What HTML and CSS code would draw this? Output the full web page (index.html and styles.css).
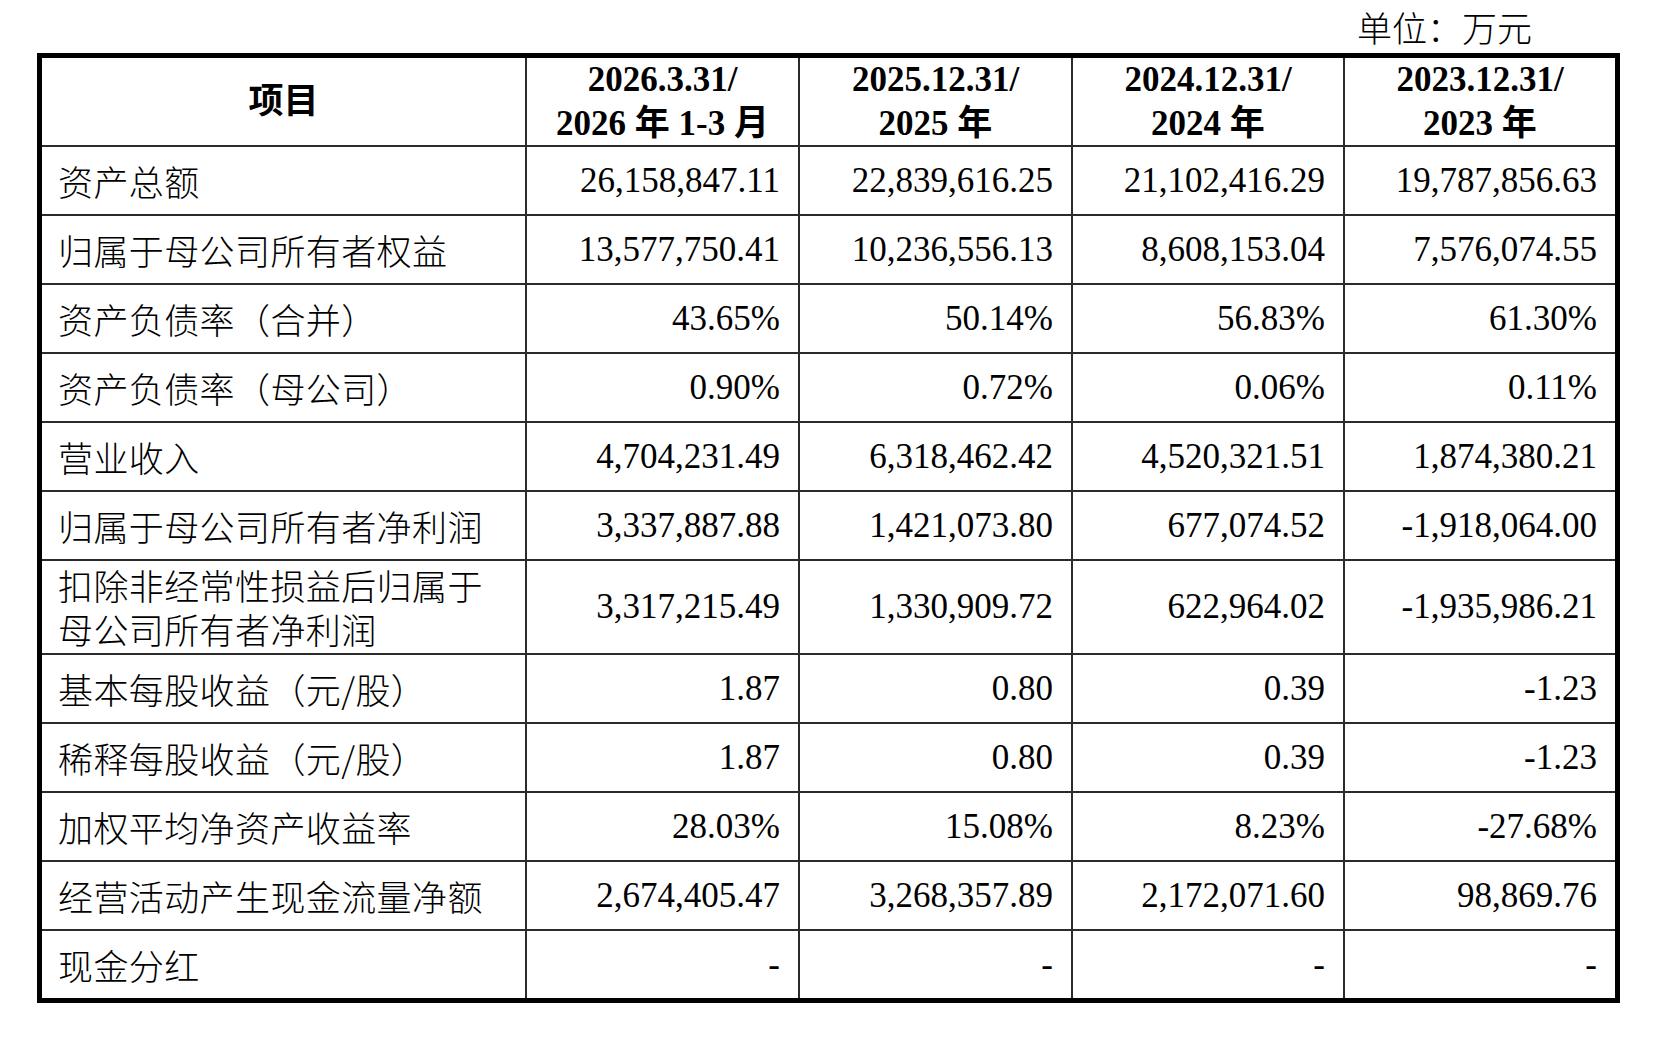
FILE: index.html
```html
<!DOCTYPE html>
<html lang="zh-CN">
<head>
<meta charset="utf-8">
<title>主要财务数据</title>
<link rel="stylesheet" href="styles.css">
</head>
<body>
<div class="page">
  <div class="unit">单位：万元</div>
  <table class="fin">
    <colgroup>
      <col class="c-item">
      <col class="c-a">
      <col class="c-b">
      <col class="c-c">
      <col class="c-d">
    </colgroup>
    <thead>
      <tr class="head">
        <th>项目</th>
        <th>2026.3.31/<br>2026 年 1-3 月</th>
        <th>2025.12.31/<br>2025 年</th>
        <th>2024.12.31/<br>2024 年</th>
        <th class="last">2023.12.31/<br>2023 年</th>
      </tr>
    </thead>
    <tbody>
      <tr><td class="label">资产总额</td><td>26,158,847.11</td><td>22,839,616.25</td><td>21,102,416.29</td><td class="last">19,787,856.63</td></tr>
      <tr><td class="label">归属于母公司所有者权益</td><td>13,577,750.41</td><td>10,236,556.13</td><td>8,608,153.04</td><td class="last">7,576,074.55</td></tr>
      <tr><td class="label">资产负债率（合并）</td><td>43.65%</td><td>50.14%</td><td>56.83%</td><td class="last">61.30%</td></tr>
      <tr><td class="label">资产负债率（母公司）</td><td>0.90%</td><td>0.72%</td><td>0.06%</td><td class="last">0.11%</td></tr>
      <tr><td class="label">营业收入</td><td>4,704,231.49</td><td>6,318,462.42</td><td>4,520,321.51</td><td class="last">1,874,380.21</td></tr>
      <tr><td class="label">归属于母公司所有者净利润</td><td>3,337,887.88</td><td>1,421,073.80</td><td>677,074.52</td><td class="last">-1,918,064.00</td></tr>
      <tr class="tall"><td class="label"><div class="ln">扣除非经常性损益后归属于</div><div class="ln">母公司所有者净利润</div></td><td>3,317,215.49</td><td>1,330,909.72</td><td>622,964.02</td><td class="last">-1,935,986.21</td></tr>
      <tr><td class="label">基本每股收益（元/股）</td><td>1.87</td><td>0.80</td><td>0.39</td><td class="last">-1.23</td></tr>
      <tr><td class="label">稀释每股收益（元/股）</td><td>1.87</td><td>0.80</td><td>0.39</td><td class="last">-1.23</td></tr>
      <tr><td class="label">加权平均净资产收益率</td><td>28.03%</td><td>15.08%</td><td>8.23%</td><td class="last">-27.68%</td></tr>
      <tr><td class="label">经营活动产生现金流量净额</td><td>2,674,405.47</td><td>3,268,357.89</td><td>2,172,071.60</td><td class="last">98,869.76</td></tr>
      <tr class="final"><td class="label">现金分红</td><td>-</td><td>-</td><td>-</td><td class="last">-</td></tr>
    </tbody>
  </table>
</div>
</body>
</html>
```

FILE: styles.css
```css
html, body {
  margin: 0;
  padding: 0;
  background: #ffffff;
}

body {
  font-family: "Liberation Serif", "Noto Sans CJK SC", serif;
  color: #000000;
  font-size: 35px;
}

.page {
  width: 1662px;
  height: 1040px;
  padding-left: 37px;
  box-sizing: border-box;
}

.unit {
  width: 1583px;
  height: 53px;
  line-height: 54px;
  padding-right: 88px;
  box-sizing: border-box;
  text-align: right;
  font-family: "Noto Sans CJK SC", sans-serif;
  font-weight: 300;
  font-size: 35px;
}

.fin {
  width: 1583px;
  box-sizing: border-box;
  border: 5px solid #000000;
  border-collapse: separate;
  border-spacing: 0;
  table-layout: fixed;
}

.c-item { width: 485px; }
.c-a { width: 273px; }
.c-b { width: 273px; }
.c-c { width: 272px; }
.c-d { width: 270px; }

.fin th,
.fin td {
  box-sizing: border-box;
  border-right: 2px solid #2b2b2b;
  border-bottom: 2px solid #2b2b2b;
  padding: 0;
  vertical-align: middle;
}

.fin th.last,
.fin td.last {
  border-right: none;
}

.fin tr.final td {
  border-bottom: none;
}

.head {
  height: 89px;
}

.fin th {
  font-weight: bold;
  text-align: center;
  line-height: 43.5px;
  white-space: nowrap;
}

.fin tbody tr {
  height: 69px;
}

.fin tbody tr.tall {
  height: 94px;
}

.fin tbody tr.final {
  height: 67px;
}

.fin td {
  text-align: right;
  padding-right: 18px;
  line-height: 44px;
  white-space: nowrap;
}

.fin td.label {
  text-align: left;
  padding-left: 16px;
  padding-right: 0;
  font-family: "Noto Sans CJK SC", sans-serif;
  font-weight: 300;
  letter-spacing: 0.4px;
}

.fin td.label .ln {
  height: 44px;
  line-height: 44px;
}
```
